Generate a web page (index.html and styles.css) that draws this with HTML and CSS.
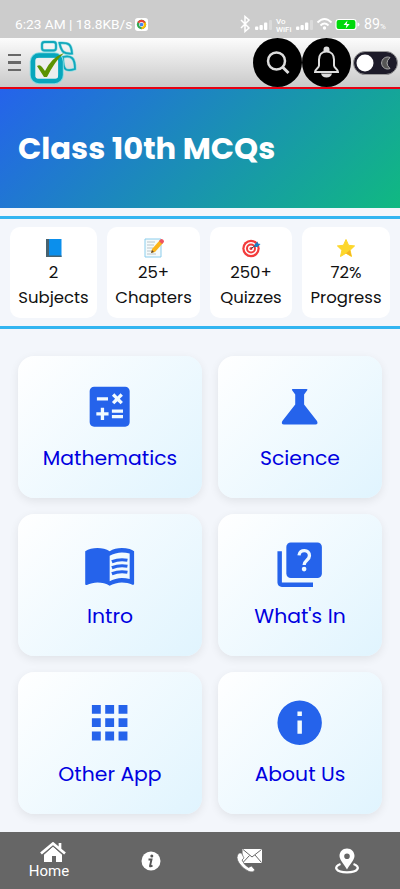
FILE: index.html
```html
<!DOCTYPE html>
<html lang="en">
<head>
<meta charset="utf-8">
<meta name="viewport" content="width=device-width">
<title>Class 10th MCQs</title>
<link rel="stylesheet" href="styles.css">
</head>
<body>
<div class="status">
  <span class="clock">6:23 AM | 18.8KB/s</span>
  <svg class="chrome" viewBox="0 0 14 14" width="13" height="13"><rect width="14" height="14" rx="3" fill="#fff"/><circle cx="7" cy="7" r="5" fill="#34a853"/><path d="M7 7L2.670 4.500A5 5 0 0 1 11.330 4.500Z" fill="#ea4335"/><path d="M7 7L11.330 4.500A5 5 0 0 1 7 12Z" fill="#fbbc05"/><circle cx="7" cy="7" r="2.600" fill="#fff"/><circle cx="7" cy="7" r="2" fill="#4285f4"/></svg>
  <svg class="signals" viewBox="0 0 122 18" width="122" height="18" fill="#fff">
    <path d="M1 5l8 8-4 3.500V1.500L9 5l-8 8" fill="none" stroke="#fff" stroke-width="1.500"/>
    <rect x="15" y="11.500" width="3.300" height="3.500" rx="1"/><rect x="19.500" y="10" width="3.300" height="5" rx="1"/><rect x="24" y="7.500" width="3.300" height="7.500" rx="1"/><rect x="29" y="5" width="3" height="10" rx="1" opacity=".3"/>
    <text x="36" y="8.500" class="tiny">Vo</text><text x="36" y="16.500" class="tiny">WiFi</text>
    <rect x="56" y="11.500" width="3.300" height="3.500" rx="1"/><rect x="60.500" y="10" width="3.300" height="5" rx="1"/><rect x="65" y="7.500" width="3.300" height="7.500" rx="1"/><rect x="70" y="5" width="3" height="10" rx="1" opacity=".3"/>
    <path d="M77.500 7.500Q84.500 .500 91.500 7.500M80.500 10.500Q84.500 6.500 88.500 10.500" fill="none" stroke="#fff" stroke-width="1.900"/><circle cx="84.500" cy="13" r="1.700"/>
    <rect x="96" y="4.500" width="20" height="10" rx="2.500" fill="#00d80b" stroke="#fff" stroke-width="1.200"/><path d="M117.500 7.500q2 0 2 2t-2 2z"/><path d="M107.500 5.500l-4 4.500h3l-.8 3.500 4-4.500h-3z"/>
  </svg>
  <span class="charge">89<small>%</small></span>
</div>
<header class="top">
  <div class="menu"><i></i><i></i><i></i></div>
  <svg class="logo" viewBox="0 0 48 46" width="48" height="46" fill="none">
    <g stroke="#8adbe2" stroke-width="3"><rect x="13" y="3" width="14" height="8.500" rx="2.500"/><path d="M30.500 4q7-.5 9.500 1.500t3 9q-6 .5-8.500-1.500T30.500 4zM34 18q6-1.500 9 1t3 11q-6 2-9 .5t-3-12.500z"/></g>
    <g stroke="#12a8bb" stroke-width="1.800"><rect x="13" y="3" width="14" height="8.500" rx="2.500"/><path d="M30.500 4q7-.5 9.500 1.500t3 9q-6 .5-8.500-1.500T30.500 4zM34 18q6-1.500 9 1t3 11q-6 2-9 .5t-3-12.500z"/></g>
    <rect x="4" y="16.500" width="27.500" height="25.500" rx="6" stroke="#83dbe2" stroke-width="6.500"/><rect x="4" y="16.500" width="27.500" height="25.500" rx="6" stroke="#08a6bc" stroke-width="4.600"/>
    <rect x="6.500" y="19" width="22.500" height="20.500" rx="2" fill="#eee"/>
    <path d="M8 27q3-2 5 1l3 4Q23 18 35 14 26 22 18 38h-3z" fill="#5c9300"/>
  </svg>
  <svg class="actions" viewBox="0 0 98 49" width="98" height="49">
    <circle cx="24.500" cy="24.500" r="24.500"/><circle cx="73.500" cy="24.500" r="24.500"/>
    <g fill="none" stroke="#ddd" stroke-width="2.500"><circle cx="23.500" cy="23" r="8.500"/><path d="M29.500 29l6 6" stroke-width="3"/><path d="M73.500 13.500c-5 0-7.500 3.500-7.500 8v6c0 2.500-4 3.500-4 6.500h23c0-3-4-4-4-6.500v-6c0-4.500-2.500-8-7.500-8z" stroke-width="2"/></g>
    <path d="M68 35.500h11q-1 4-5.500 4t-5.500-4zM70.500 13v-1.500a3 3 0 0 1 6 0V13z" fill="#ddd"/>
  </svg>
  <svg class="toggle" viewBox="0 0 45 24" width="45" height="24"><rect x=".500" y=".500" width="44" height="23" rx="11.500" fill="#1d1b29" stroke="#999"/><circle cx="12" cy="12" r="8.500" fill="#fff"/><path d="M37 6.500a6 6 0 1 0 0 11q-6-5.500 0-11z" fill="#555" stroke="#aaa"/></svg>
</header>
<section class="hero"><h1>Class 10th MCQs</h1></section>
<section class="stats">
  <div class="stat"><svg viewBox="0 0 20 20"><path d="M3 1h14.500v18H3z" fill="#0b8fec"/><path d="M2 1h3v18H2zM3 17.500h14.500V19H3z" fill="#48626f"/></svg><b>2</b><span>Subjects</span></div>
  <div class="stat"><svg viewBox="0 0 20 20"><path d="M1 1h16v18H1z" fill="#f5fafb" stroke="#8bcdec"/><path d="M3 4h8M3 7h7M3 10h6M3 13h5M3 16h9" stroke="#bac5ca"/><path d="M7 15l1-4 8-9 3 3-8 9z" fill="#fbb41b"/><path d="M15 3l2-2q3 0 3 3l-2 2z" fill="#ef5360"/><path d="M7 15l1-3 2 2z" fill="#574439"/></svg><b>25+</b><span>Chapters</span></div>
  <div class="stat"><svg viewBox="0 0 20 20"><circle cx="10" cy="10.500" r="8.700" fill="#f33b3b"/><circle cx="10" cy="10.500" r="6.500" fill="#fff"/><circle cx="10" cy="10.500" r="5" fill="#f33b3b"/><circle cx="10" cy="10.500" r="3" fill="#fff"/><circle cx="10" cy="10.500" r="1.500" fill="#f33b3b"/><path d="M10 10.500l6-4" stroke="#345"/><path d="M13.500 6.500l3-3 .5 2 2.500.5-3 3h-3z" fill="#197fc3"/></svg><b>250+</b><span>Quizzes</span></div>
  <div class="stat"><svg viewBox="0 0 20 20"><path d="M10 1.500l2.600 5.800 6 .6-4.500 4.300 1.400 6.300-5.500-3.300-5.500 3.300 1.400-6.300-4.500-4.300 6-.6z" fill="#fdd72c" stroke="#fdd72c" stroke-linejoin="round"/><path d="M14 12l1.500 6.500L10 15.200z" fill="#f4b520"/></svg><b>72%</b><span>Progress</span></div>
</section>
<main class="grid">
  <a class="card"><svg viewBox="0 0 24 24"><path fill-rule="evenodd" d="M19 3H5c-1.100 0-2 .9-2 2v14c0 1.100.9 2 2 2h14c1.100 0 2-.9 2-2V5c0-1.100-.9-2-2-2zm-5.970 4.060L14.090 6l1.410 1.410L16.910 6l1.060 1.060-1.410 1.410 1.410 1.410-1.060 1.060-1.410-1.400-1.410 1.410-1.060-1.060 1.410-1.410-1.410-1.420zm-6.780.66h5v1.500h-5v-1.500zM11.500 16h-2v2H8v-2H6v-1.500h2v-2h1.500v2h2V16zm6.500 1.250h-5v-1.500h5v1.500zm0-2.500h-5v-1.500h5v1.500z"/></svg><span>Mathematics</span></a>
  <a class="card"><svg viewBox="0 0 24 24"><path d="M9 4h6q.8 0 .4.600L14 6.500V11l5.800 7.400q.7 1.500-.7 1.600H4.900q-1.400-.1-.7-1.600L10 11V6.500L8.600 4.600Q8.200 4 9 4z"/></svg><span>Science</span></a>
  <a class="card"><svg viewBox="0 0 24 24"><path fill-rule="evenodd" d="M21 5c-1.110-.35-2.330-.5-3.500-.5-1.950 0-4.050.4-5.500 1.500-1.450-1.100-3.550-1.500-5.500-1.500S2.450 4.900 1 6v14.650c0 .25.25.5.5.5.1 0 .15-.05.25-.05C3.100 20.450 5.050 20 6.500 20c1.950 0 4.050.4 5.500 1.500 1.350-.85 3.800-1.500 5.500-1.500 1.650 0 3.350.3 4.750 1.050.1.050.15.050.25.050.25 0 .5-.25.5-.5V6c-.6-.45-1.250-.75-2-1zm0 13.500c-1.100-.35-2.300-.5-3.500-.5-1.700 0-4.150.65-5.500 1.500V8c1.350-.85 3.800-1.500 5.500-1.500 1.200 0 2.400.15 3.500.5v11.500z"/><path d="M13 10.700q3.300-1.400 7-.7M13 13.400q3.300-1.400 7-.7M13 16.100q3.300-1.400 7-.7" fill="none" stroke="#2563eb" stroke-width="1.400"/></svg><span>Intro</span></a>
  <a class="card"><svg viewBox="0 0 24 24"><path d="M4 6H2v14c0 1.100.9 2 2 2h14v-2H4V6z"/><rect x="6" y="2" width="16" height="16" rx="2"/><path d="M11.700 7.800c.3-3 4.800-2.800 4.700.2 0 2-2.400 2-2.400 4.200" fill="none" stroke="#eef9ff" stroke-width="1.500"/><circle cx="14" cy="14" r="1.050" fill="#eef9ff"/></svg><span>What's In</span></a>
  <a class="card"><svg viewBox="0 0 24 24"><path d="M4 4h4v4H4zM10 4h4v4h-4zM16 4h4v4h-4zM4 10h4v4H4zM10 10h4v4h-4zM16 10h4v4h-4zM4 16h4v4H4zM10 16h4v4h-4zM16 16h4v4h-4z"/></svg><span>Other App</span></a>
  <a class="card"><svg viewBox="0 0 24 24"><path fill-rule="evenodd" d="M12 2a10 10 0 1 0 0 20 10 10 0 0 0 0-20zm1 15h-2v-6h2v6zm0-8h-2V7h2v2z"/></svg><span>About Us</span></a>
</main>
<nav class="nav">
  <a class="home"><svg viewBox="0 0 26 21" width="26" height="21"><path d="M4 12.500l9-8 9 8V20h-6v-6h-4v6H4z"/><path d="M1 11.500L13 1.500l12 10M20 1v6" fill="none" stroke="#fff" stroke-width="2.700"/><path d="M3 13l10-8.800L23 13" fill="none" stroke="#666" stroke-width=".800"/></svg><span>Home</span></a>
  <a><svg viewBox="0 0 20 20" width="20" height="20"><circle cx="10" cy="10" r="9.500"/><circle cx="10.800" cy="5" r="1.500" fill="#555"/><path d="M7.500 8.500h3l-1.500 6.500q0 1 2.500-.5" fill="none" stroke="#555" stroke-width="1.900"/></svg></a>
  <a><svg viewBox="0 0 26 25" width="26" height="25"><path d="M6.500 1H26v14H6.500z"/><path d="M7 1.500l9 7.500 9.500-7.500M7 14.500l6.500-7M25.500 14.500L19 7" fill="none" stroke="#555" stroke-width=".900"/><path d="M3 5Q-1 9 3 15q4 6 10 8.500 4 1.500 6-1.500l-3.500-4-3 1.500Q8 17 6 12l2-2-2.500-5z" stroke="#666" stroke-width=".700"/></svg></a>
  <a><svg viewBox="0 0 26 26" width="26" height="26"><path fill-rule="evenodd" d="M13 .5C8.500.5 5.500 4 5.500 8c0 4 5.500 9.500 7.500 13.500C15 17.500 20.500 12 20.500 8c0-4-3-7.500-7.500-7.500zm0 5a2.800 2.800 0 1 1 0 5.600 2.800 2.800 0 0 1 0-5.600z"/><path d="M6.500 16C-1 18.500 1.500 24.300 13 24.300S27 18.500 19.500 16" fill="none" stroke="#fff" stroke-width="2.300"/></svg></a>
</nav>
</body>
</html>
```
FILE: styles.css
```css
* { box-sizing: border-box; }
body {
  margin: 0;
  width: 400px;
  height: 889px;
  overflow: hidden;
  display: flex;
  flex-direction: column;
  background: #f3f6fb;
  color: #111;
  font-family: Poppins, Inter, sans-serif;
}
svg { display: block; flex: none; }
.status {
  height: 38px;
  flex: none;
  display: flex;
  align-items: center;
  padding: 10px 0 0 15px;
  background: #ccc;
  color: #fff;
  font: 14.200px Roboto, sans-serif;
}
.clock { width: 120px; white-space: nowrap; font-size: 13.700px; }
.signals { margin-left: 92px; }
.tiny { font: 500 8px Roboto, sans-serif; }
.charge { margin-left: 2px; white-space: nowrap; }
.charge small { font-size: 8px; }
.top {
  height: 51px;
  flex: none;
  display: flex;
  align-items: center;
  padding-left: 8px;
  background: linear-gradient(#fcfcfc, #c9c9c9);
  border-bottom: 2.500px solid #e60012;
}
.menu { width: 13px; display: grid; gap: 5px; }
.menu i { height: 2.500px; background: #686868; }
.logo { margin: 0 0 2px 8px; }
.actions { margin-left: 176px; }
.toggle { margin-left: 2px; }
.hero {
  height: 119px;
  flex: none;
  display: flex;
  align-items: center;
  padding-left: 18px;
  background: linear-gradient(135deg, #2563eb, #10b981);
}
h1 { margin: 0; font-size: 30.600px; font-weight: 700; color: #fff; white-space: nowrap; }
.stats {
  margin-top: 8px;
  height: 113px;
  flex: none;
  display: grid;
  grid-template-columns: 87px 93px 82px 88px;
  gap: 10px;
  padding: 8px 10px;
  border: solid #32b5f1;
  border-width: 3px 0;
}
.stat {
  display: flex;
  flex-direction: column;
  align-items: center;
  padding-top: 11px;
  border-radius: 10px;
  background: #fff;
  font-size: 16.500px;
  line-height: 25px;
  white-space: nowrap;
}
.stat svg { width: 20px; height: 20px; margin-bottom: 1.500px; }
.stat b { font-weight: 400; }
.grid {
  flex: none;
  height: 503px;
  padding: 27px 18px 0;
  display: grid;
  grid-template-columns: 184px 164px;
  grid-auto-rows: 141.500px;
  gap: 16.500px 16px;
}
.card {
  display: flex;
  flex-direction: column;
  align-items: center;
  padding-top: 24px;
  border-radius: 16px;
  background: linear-gradient(135deg, #fff, #e0f4fe);
  box-shadow: 0 3px 10px rgba(0, 0, 0, .08);
  color: #0000e0;
  font-size: 20.350px;
  line-height: 32px;
  white-space: nowrap;
}
.card svg { width: 53.330px; height: 53.330px; margin-bottom: 8.500px; fill: #2563eb; }
.nav {
  height: 57px;
  flex: none;
  display: grid;
  grid-template-columns: 101px 99px 98px 98px;
  align-items: center;
  justify-items: center;
  background: #666;
  color: #fff;
  font: 15px Roboto, sans-serif;
}
.nav svg { fill: #fff; }
.home { display: flex; flex-direction: column; align-items: center; padding-right: 3px; }
.home svg { margin-left: 7px; }
.home span { line-height: 16px; }
```
